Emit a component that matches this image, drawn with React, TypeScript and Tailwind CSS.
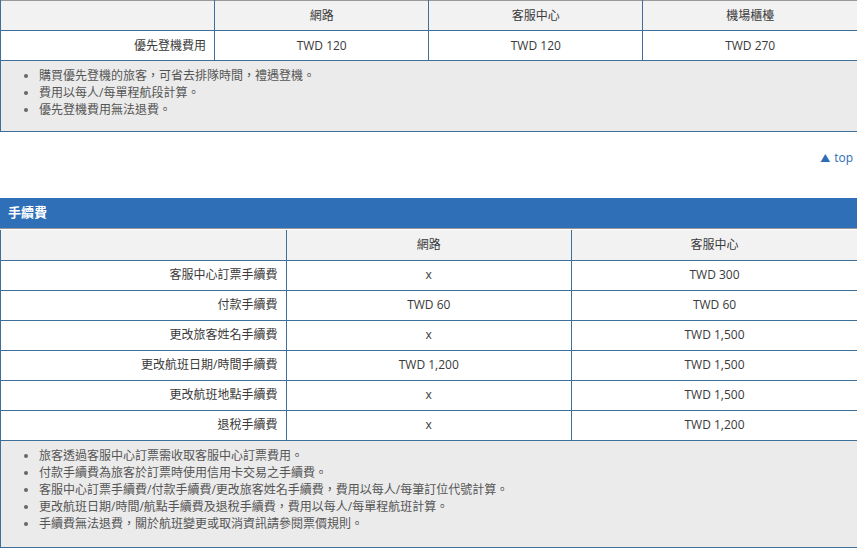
const font = { fontFamily: '"Open Sans", "Noto Sans CJK TC", sans-serif' };

const priorityNotes = [
  '購買優先登機的旅客，可省去排隊時間，禮遇登機。',
  '費用以每人/每單程航段計算。',
  '優先登機費用無法退費。',
];

const feeRows = [
  ['客服中心訂票手續費', 'x', 'TWD 300'],
  ['付款手續費', 'TWD 60', 'TWD 60'],
  ['更改旅客姓名手續費', 'x', 'TWD 1,500'],
  ['更改航班日期/時間手續費', 'TWD 1,200', 'TWD 1,500'],
  ['更改航班地點手續費', 'x', 'TWD 1,500'],
  ['退稅手續費', 'x', 'TWD 1,200'],
];

const feeNotes = [
  '旅客透過客服中心訂票需收取客服中心訂票費用。',
  '付款手續費為旅客於訂票時使用信用卡交易之手續費。',
  '客服中心訂票手續費/付款手續費/更改旅客姓名手續費，費用以每人/每筆訂位代號計算。',
  '更改航班日期/時間/航點手續費及退稅手續費，費用以每人/每單程航班計算。',
  '手續費無法退費，關於航班變更或取消資訊請參閱票價規則。',
];

function Notes({ items, pb }: { items: string[]; pb: string }) {
  return (
    <ul className={`list-disc pl-[38px] pt-[6px] ${pb} text-[12px] leading-[17px] text-[#555] marker:text-[#666]`}>
      {items.map((n) => (
        <li key={n}>{n}</li>
      ))}
    </ul>
  );
}

export default function App() {
  const cell = 'h-[30px] border-b border-l border-[#3d6f98] text-center align-middle p-0';
  return (
    <div className="w-[857px] h-[549px] bg-white overflow-hidden text-[#3a3a3a]" style={font}>
      {/* Priority boarding */}
      <table className="w-full table-fixed border-collapse text-[12px] border-t border-t-[#999]">
        <tbody>
          <tr className="bg-[#f2f2f2]">
            <td className={cell} />
            <td className={cell}>網路</td>
            <td className={cell}>客服中心</td>
            <td className={cell}>機場櫃檯</td>
          </tr>
          <tr className="bg-white">
            <td className={`${cell} text-right pr-[8px]`}>優先登機費用</td>
            <td className={cell}>TWD 120</td>
            <td className={cell}>TWD 120</td>
            <td className={cell}>TWD 270</td>
          </tr>
          <tr className="bg-[#ebebeb]">
            <td colSpan={4} className="border-b border-l border-[#3d6f98] p-0 h-[71px] align-top">
              <Notes items={priorityNotes} pb="pb-[13px]" />
            </td>
          </tr>
        </tbody>
      </table>

      <div className="flex justify-end items-start pr-[4px] pt-[18px] h-[66px]">
        <a className="text-[12px] leading-[16px] text-[#2d6db5] flex items-center gap-[4px]">
          <span className="text-[10px]">▲</span>top
        </a>
      </div>

      {/* Fees */}
      <div className="h-[30px] bg-[#2e6fb7] flex items-center px-[8px] text-white font-bold text-[13px]">
        手續費
      </div>
      <div className="h-[2px] border-t border-[#999] bg-white" />
      <table className="w-full table-fixed border-collapse text-[12px]">
        <tbody>
          <tr className="bg-[#f2f2f2]">
            <td className={cell} />
            <td className={cell}>網路</td>
            <td className={cell}>客服中心</td>
          </tr>
          {feeRows.map(([label, web, cs]) => (
            <tr key={label} className="bg-white">
              <td className={`${cell} text-right pr-[8px]`}>{label}</td>
              <td className={cell}>{web}</td>
              <td className={cell}>{cs}</td>
            </tr>
          ))}
          <tr className="bg-[#ebebeb]">
            <td colSpan={3} className="border-b border-l border-[#3d6f98] p-0 h-[107px] align-top">
              <Notes items={feeNotes} pb="pb-[15px]" />
            </td>
          </tr>
        </tbody>
      </table>
    </div>
  );
}
